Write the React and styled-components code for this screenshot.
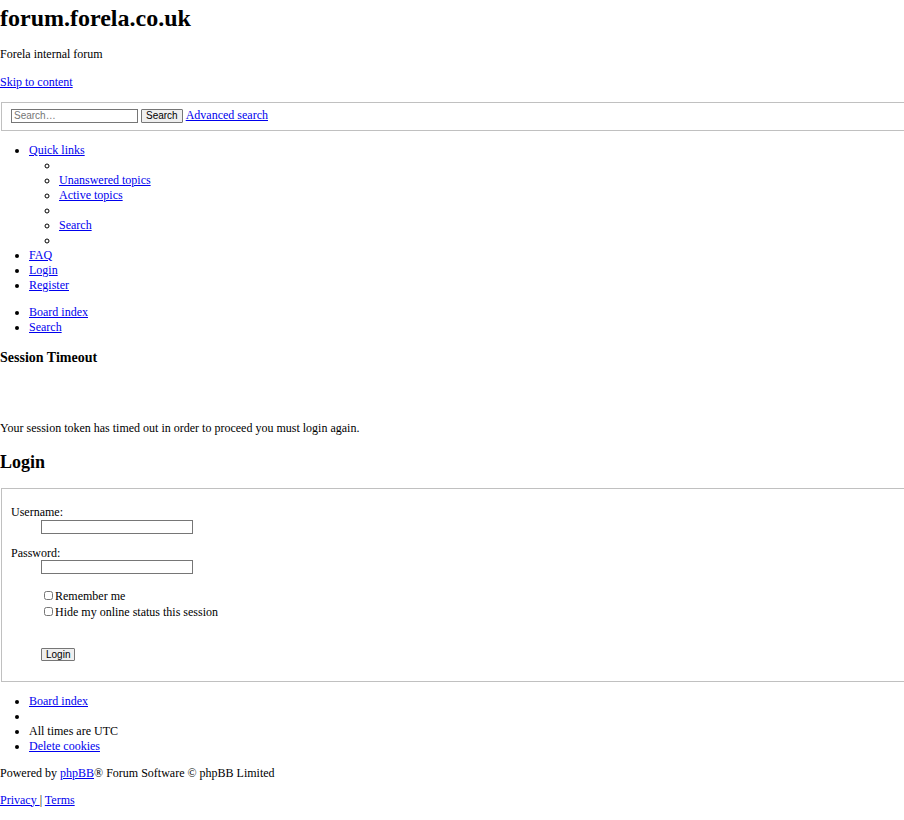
import styled, { createGlobalStyle } from 'styled-components';

const GlobalStyle = createGlobalStyle`
  html, body {
    margin: 0;
    padding: 0;
    background: #fff;
    overflow-x: hidden;
  }

  body {
    font-family: "Liberation Serif", "Times New Roman", serif;
    font-size: 12px;
    line-height: 15px;
    color: #000;
  }

  a {
    color: #0000ee;
    text-decoration: underline;
  }
`;

const Page = styled.div`
  width: 1100px;
`;

const SiteTitle = styled.h1`
  margin: 4px 0 15px;
  font-size: 24px;
  line-height: 28px;
  font-weight: bold;
`;

const Para = styled.p`
  margin: ${(p) => p.$top || 0}px 0 ${(p) => p.$bottom ?? 12}px;
`;

const Box = styled.fieldset`
  margin: 0 1px;
  padding: ${(p) => p.$pad || '5px 9px 7px'};
  border: 1px solid #c0c0c0;
  min-width: 0;
`;

const TextInput = styled.input`
  box-sizing: border-box;
  width: ${(p) => p.$w || 127}px;
  height: 14px;
  margin: 0;
  padding: 0 2px;
  border: 1px solid #767676;
  font-family: "Liberation Sans", Arial, sans-serif;
  font-size: 10px;

  &::placeholder {
    color: #757575;
  }
`;

const SmallButton = styled.button`
  box-sizing: border-box;
  height: ${(p) => p.$h || 14}px;
  margin: 0;
  padding: 0 4px;
  border: 1px solid #767676;
  border-radius: 1px;
  background: #efefef;
  font-family: "Liberation Sans", Arial, sans-serif;
  font-size: 10px;
  line-height: 11px;
`;

const SearchRow = styled.div`
  display: flex;
  align-items: center;
  gap: 3px;
  height: 15px;
`;

const List = styled.ul`
  margin: ${(p) => (p.$nested ? 0 : 12)}px 0;
  padding-left: ${(p) => (p.$nested ? 30 : 29)}px;
  list-style-type: ${(p) => (p.$nested ? 'circle' : 'disc')};
`;

const Item = styled.li`
  min-height: 15px;
`;

const SectionTitle = styled.h3`
  margin: 14px 0 0;
  font-size: 14px;
  line-height: 17px;
  font-weight: bold;
`;

const Message = styled.p`
  margin: 55px 0 0;
`;

const LoginTitle = styled.h2`
  margin: 15px 0 15px;
  font-size: 18px;
  line-height: 22px;
  font-weight: bold;
`;

const Field = styled.dl`
  margin: ${(p) => p.$top ?? 12}px 0 0;
`;

const Label = styled.dt`
  min-height: 15px;
`;

const Value = styled.dd`
  display: flex;
  flex-direction: column;
  align-items: flex-start;
  margin: ${(p) => p.$top ?? -0.5}px 0 0 30px;
`;

const CheckLabel = styled.label`
  display: flex;
  align-items: center;
  height: 16px;
  margin-left: 2px;
`;

const Check = styled.input.attrs({ type: 'checkbox' })`
  width: 9px;
  height: 9px;
  margin: 0 2px 1px 1px;
`;

const links = (items) =>
  items.map((t, i) => (
    <Item key={i}>{t ? <a href="#">{t}</a> : null}</Item>
  ));

export default function App() {
  return (
    <Page>
      <GlobalStyle />
      <SiteTitle>forum.forela.co.uk</SiteTitle>
      <Para $top={1} $bottom={13}>Forela internal forum</Para>
      <Para $bottom={12}>
        <a href="#">Skip to content</a>
      </Para>

      <Box>
        <SearchRow>
          <TextInput placeholder="Search…" />
          <SmallButton>Search</SmallButton>
          <a href="#">Advanced search</a>
        </SearchRow>
      </Box>

      <List>
        <Item>
          <a href="#">Quick links</a>
          <List $nested>
            {links(['', 'Unanswered topics', 'Active topics', '', 'Search', ''])}
          </List>
        </Item>
        {links(['FAQ', 'Login', 'Register'])}
      </List>
      <List>{links(['Board index', 'Search'])}</List>

      <SectionTitle>Session Timeout</SectionTitle>
      <Message>Your session token has timed out in order to proceed you must login again.</Message>

      <LoginTitle>Login</LoginTitle>
      <Box $pad="4px 9px 20px">
        <Field>
          <Label>Username:</Label>
          <Value>
            <TextInput $w={152} />
          </Value>
        </Field>
        <Field $top={12}>
          <Label>Password:</Label>
          <Value>
            <TextInput $w={152} type="password" />
          </Value>
        </Field>
        <Field $top={14}>
          <Value $top={0}>
            <CheckLabel>
              <Check />
              Remember me
            </CheckLabel>
            <CheckLabel>
              <Check />
              Hide my online status this session
            </CheckLabel>
          </Value>
        </Field>
        <Field $top={13}>
          <Label />
          <Value>
            <SmallButton $h={13}>Login</SmallButton>
          </Value>
        </Field>
      </Box>

      <List>
        {links(['Board index'])}
        <Item />
        <Item>All times are UTC</Item>
        {links(['Delete cookies'])}
      </List>

      <Para>
        Powered by <a href="#">phpBB</a>® Forum Software © phpBB Limited
      </Para>
      <Para>
        <a href="#">Privacy </a> | <a href="#">Terms</a>
      </Para>
    </Page>
  );
}
